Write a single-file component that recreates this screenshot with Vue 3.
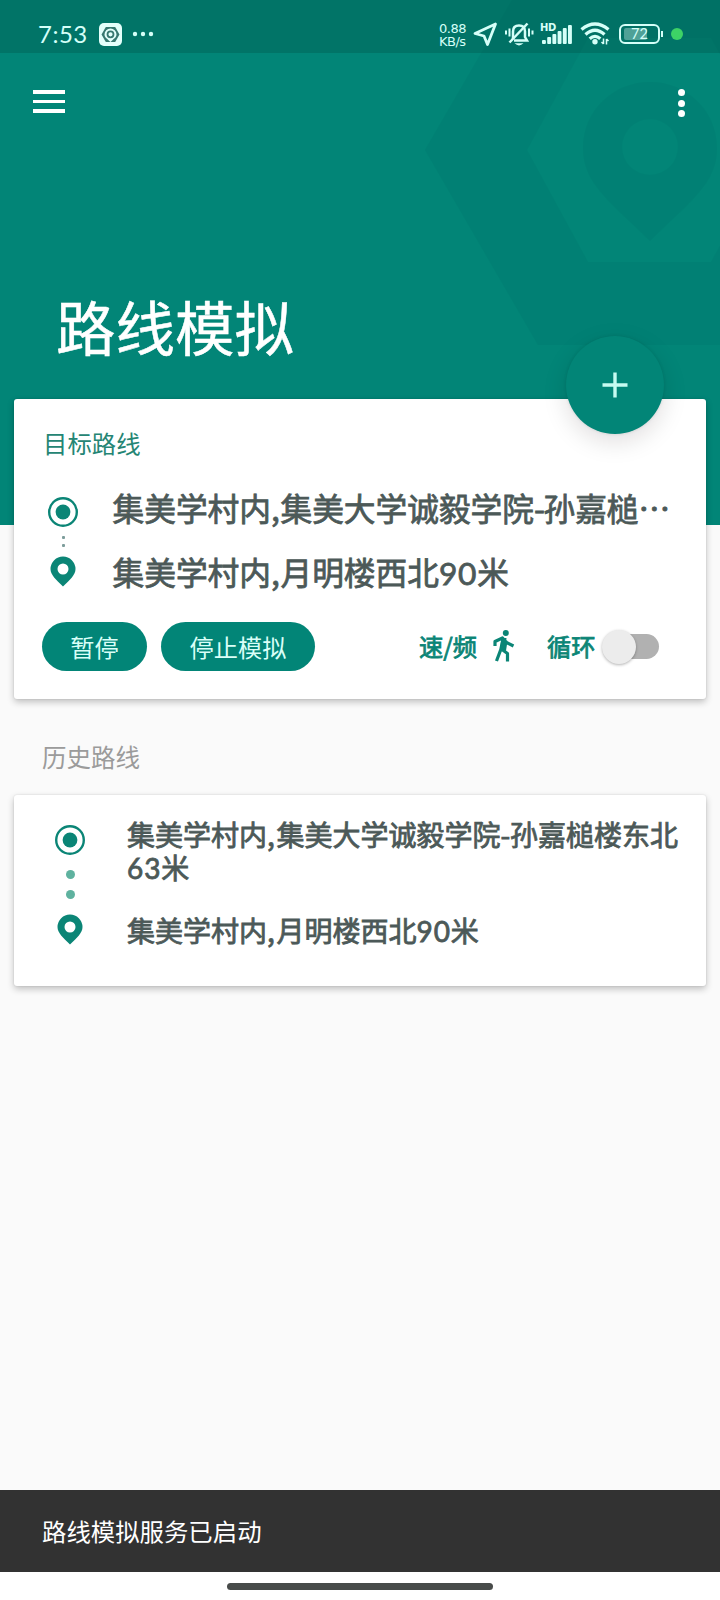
<script setup>
const start = ['集美学村内', ',', '集美大学诚毅学院', '-', '孙嘉槌']
const end = ['集美学村内', ',', '月明楼西北', '90', '米']
const current = [[...start, '…'], end]
const history = [[...start.slice(0, 4), '孙嘉槌楼东北', '63', '米'], end]
const kind = (t) => (t === ',' ? 'comma' : t === '-' ? 'dash' : /^\d/.test(t) ? 'num' : 'han')
const bars = [4, 7, 10, 13, 16, 19]
</script>

<template>
  <div class="page">
    <header class="hero">
      <svg class="mark" viewBox="0 0 300 525" width="300" height="525">
        <path fill-rule="evenodd" d="M5 150 118 -45H343L455 150 343 345H118ZM107 150 168 262H291L353 150 291 38H168Z" />
        <path fill-rule="evenodd" d="M230 82C193 82 163 111 163 148C163 184 190 201 230 241C270 201 297 184 297 148C297 111 267 82 230 82ZM230 119A28 28 0 1 1 230 175A28 28 0 1 1 230 119Z" />
      </svg>
      <div class="status">
        <span class="time">7:53</span>
        <svg class="app" width="23" height="23" viewBox="0 0 23 23">
          <rect width="23" height="23" rx="5" fill="#e4fffb" />
          <path d="M2.500 11.500 6.800 4h9.400l4.300 7.500-4.300 7.500H6.800Z" fill="#37776f" />
          <path d="M11.500 5.500a6 6 0 0 0-6 6c0 3 3 4.500 6 7.500 3-3 6-4.500 6-7.500a6 6 0 0 0-6-6Z" fill="#e4fffb" />
          <circle cx="11.500" cy="11.300" r="3" fill="none" stroke="#37776f" stroke-width="1.800" />
        </svg>
        <svg class="more" width="22" height="6" viewBox="0 0 22 6">
          <circle cx="3" cy="3" r="2.200" /><circle cx="11" cy="3" r="2.200" /><circle cx="19" cy="3" r="2.200" />
        </svg>
        <div class="speed"><span>0.88</span><span>KB/s</span></div>
        <svg class="nav" width="25" height="25" viewBox="0 0 25 25">
          <path d="M22.500 2 2 11.500 11 14 14.500 22.500Z" fill="none" stroke="#d5fff8" stroke-width="2.800" stroke-linejoin="round" />
        </svg>
        <svg class="bell" width="30" height="26" viewBox="0 0 30 26" fill="none" stroke="#d5fff8">
          <path d="M9 18V10.500C9 6.500 11.500 4.500 15 4.500S21 6.500 21 10.500V16L23 19.500H10" stroke-width="2.500" />
          <path d="M5.500 21.500 23.500 2.500" stroke-width="2.500" />
          <path d="M10.500 22.300H19.500Q15 26.500 10.500 22.300Z" fill="#d5fff8" stroke="none" />
          <path d="M5.500 7.500V15.500M2 9.500V13.500M25 7.500V15.500M28.500 9.500V13.500" stroke-width="2" />
        </svg>
        <div class="signal">
          <b>HD</b>
          <svg width="32" height="21" viewBox="0 0 32 21">
            <rect v-for="(h, i) in bars" :key="h" :x="1 + i * 5.200" :y="20 - h" width="3.900" :height="h" rx="1" fill="#d5fff8" />
          </svg>
        </div>
        <svg class="wifi" width="31" height="24" viewBox="0 0 31 24" fill="none" stroke="#d5fff8" stroke-width="3.300">
          <path d="M1.500 7.500Q15 -3.500 28.500 7.500M5.500 12.500Q15 4 24.500 12.500M9.700 16.800Q15 12 20.300 16.800" />
          <circle cx="15" cy="19.700" r="2.700" fill="#d5fff8" stroke="none" />
          <path d="M23.500 16.500V22M21.500 20 23.500 22M26.500 22.500V17M28.500 19 26.500 17" stroke-width="1.500" />
        </svg>
        <div class="battery"><i></i><span>72</span></div>
        <div class="live"></div>
      </div>
      <nav class="bar">
        <div class="menu"><i></i><i></i><i></i></div>
        <div class="dots"><i></i><i></i><i></i></div>
      </nav>
      <h1>路线模拟</h1>
    </header>

    <section class="card target">
      <button class="fab"><svg width="26" height="26" viewBox="0 0 26 26"><path d="M13 .5V25.500M.5 13H25.500" stroke="#c6fbf1" stroke-width="3.400" /></svg></button>
      <h2>目标路线</h2>
      <div class="route">
        <div class="rail">
          <svg width="30" height="30" viewBox="0 0 30 30"><circle cx="15" cy="15" r="13.800" fill="none" stroke="#0b8576" stroke-width="2.400" /><circle cx="15" cy="15" r="7.400" fill="#0b8576" /></svg>
          <div class="gap"><i></i><i></i></div>
          <svg width="26" height="31" viewBox="0 0 26 31"><path fill="#0b8576" fill-rule="evenodd" d="M13 0.500A12.500 12.500 0 0 0 .5 13C.5 19 6 23.500 13 30.500 20 23.500 25.500 19 25.500 13A12.500 12.500 0 0 0 13 .5ZM13 7.500A5.500 5.500 0 1 1 13 18.500 5.500 5.500 0 1 1 13 7.500Z" /></svg>
        </div>
        <div class="stops">
          <p v-for="(line, i) in current" :key="i"><span v-for="(t, j) in line" :key="j" :class="kind(t)">{{ t }}</span></p>
        </div>
      </div>
      <div class="actions">
        <button class="pill pause">暂停</button>
        <button class="pill stop">停止模拟</button>
        <span class="label rate">速<em>/</em>频</span>
        <svg class="walk" width="22" height="33" viewBox="0 0 22 33">
          <circle cx="12.800" cy="3.100" r="3" fill="#0b8576" />
          <path d="M10 9 7.800 19.500 3.500 31M9 19.500 14.500 23.500V31.500M2 16V11.500L9.500 8 13.500 12.500 20.500 16M13 10.500 11.500 20" fill="none" stroke="#0b8576" stroke-width="3.200" stroke-linejoin="round" />
          <path d="M8.500 8H13.500L12 21 7 20Z" fill="#0b8576" />
        </svg>
        <span class="label loop">循环</span>
        <div class="switch"><i></i></div>
      </div>
    </section>

    <h3>历史路线</h3>

    <section class="card past">
      <div class="rail">
        <svg width="30" height="30" viewBox="0 0 30 30"><circle cx="15" cy="15" r="13.800" fill="none" stroke="#0b8576" stroke-width="2.400" /><circle cx="15" cy="15" r="7.400" fill="#0b8576" /></svg>
        <div class="gap"><i></i><i></i></div>
        <svg width="26" height="31" viewBox="0 0 26 31"><path fill="#0b8576" fill-rule="evenodd" d="M13 0.500A12.500 12.500 0 0 0 .5 13C.5 19 6 23.500 13 30.500 20 23.500 25.500 19 25.500 13A12.500 12.500 0 0 0 13 .5ZM13 7.500A5.500 5.500 0 1 1 13 18.500 5.500 5.500 0 1 1 13 7.500Z" /></svg>
      </div>
      <div class="stops">
        <p v-for="(line, i) in history" :key="i"><span v-for="(t, j) in line" :key="j" :class="kind(t)">{{ t }}</span></p>
      </div>
    </section>

    <footer class="snack">路线模拟服务已启动</footer>
    <div class="home"><i></i></div>
  </div>
</template>

<style>
body { margin: 0; background: #fafafa; }
</style>

<style scoped>
* { box-sizing: border-box; }
.page { width: 720px; height: 1600px; display: flex; flex-direction: column; overflow: hidden; background: #fafafa; font-family: "Noto Sans CJK SC", sans-serif; }
h1, h2, h3, p { margin: 0; font-weight: 400; }
button { border: 0; padding: 0; font-family: inherit; }
i { display: block; }
svg { display: block; flex: none; }
.hero { position: relative; flex: none; height: 525px; background: #028577; color: #fff; }
.mark { position: absolute; right: 0; top: 0; fill: #007b70; opacity: .4; }
.status { position: relative; display: flex; align-items: flex-start; height: 53px; padding: 15px 0 0 38px; background: rgba(0, 85, 75, .35); color: #d5fff8; }
.time { width: 50px; font: 400 24px/38px Lato, sans-serif; letter-spacing: .5px; }
.app { margin: 8px 0 0 11px; }
.more { margin: 16px 0 0 10px; fill: #d5fff8; }
.speed { display: flex; flex-direction: column; width: 32px; margin: 8px 0 0 285px; font: 400 13px/12.500px "DejaVu Sans", sans-serif; letter-spacing: -.5px; }
.nav { margin: 7px 0 0 2px; }
.bell { margin: 6px 0 0 6px; }
.signal { position: relative; margin: 9px 0 0 7px; }
.signal b { position: absolute; left: -1px; top: -1px; font: 700 10px/9px "DejaVu Sans", sans-serif; letter-spacing: -.3px; }
.wifi { margin: 7px 0 0 7px; }
.battery { position: relative; width: 41px; height: 20px; margin: 9px 0 0 8px; border: 2px solid #d5fff8; border-radius: 6px; text-align: center; font: 400 14.500px/16px Lato, sans-serif; }
.battery i { position: absolute; left: 3px; top: 2px; width: 23px; height: 12px; background: #4fa197; border-radius: 2px; }
.battery span { position: relative; }
.battery::after { content: ""; position: absolute; right: -5px; top: 5px; width: 2px; height: 6px; background: #d5fff8; }
.live { width: 12px; height: 12px; margin: 13px 0 0 11px; border-radius: 50%; background: #3dd266; }
.bar { position: relative; display: flex; justify-content: space-between; padding: 36px 35px 0 33px; }
.menu { display: flex; flex-direction: column; gap: 6px; padding-top: 1px; }
.menu i { width: 32px; height: 3.600px; background: #fff; }
.dots { display: flex; flex-direction: column; gap: 3.500px; }
.dots i { width: 7px; height: 7px; border-radius: 50%; background: #fff; }
h1 { position: relative; padding: 165px 0 0 56px; font-size: 59.500px; line-height: 86px; -webkit-text-stroke: .5px; }
.card { position: relative; flex: none; width: 692px; margin: 0 14px; background: #fff; border-radius: 3px; box-shadow: 0 3px 7px rgba(0, 0, 0, .24), 0 0 2px rgba(0, 0, 0, .12); }
.target { height: 300px; margin-top: -126px; }
.fab { position: absolute; left: 552px; top: -63px; width: 98px; height: 98px; display: grid; place-items: center; border-radius: 50%; background: #028577; box-shadow: 0 8px 24px rgba(20, 0, 15, .13), 0 0 3px rgba(0, 50, 42, .15); }
h2 { padding: 26px 0 0 29px; font-size: 24.400px; line-height: 36px; color: #258574; }
.route { display: flex; height: 128px; padding-left: 34px; margin-top: 25px; }
.rail { display: flex; flex-direction: column; align-items: center; width: 30px; }
.target .rail { padding-top: 11px; }
.gap { display: flex; flex-direction: column; align-items: center; }
.target .gap { gap: 5px; margin: 9px 0 9px; }
.target .gap i { width: 3px; height: 3px; background: #7d9d9b; border-radius: 1px; }
.stops { color: #4c5958; -webkit-text-stroke: .8px; }
.stops span { display: inline-block; }
.target .stops { margin: -2px 0 0 34.500px; font-size: 31.700px; white-space: nowrap; }
.target p { height: 64px; line-height: 46px; }
.comma, .dash { width: 9.500px; }
.num { font-family: Lato, sans-serif; }
.target .num { letter-spacing: .8px; }
.past .num { letter-spacing: .9px; }
.actions { display: flex; align-items: center; height: 49px; margin: 8px 0 0 28px; }
.pill { height: 49px; border-radius: 25px; background: #028577; color: #d9fff8; font-size: 24.200px; line-height: 48px; }
.pause { width: 105px; }
.stop { width: 154px; margin-left: 14px; }
.label { color: #0b8576; font-size: 24.200px; line-height: 36px; white-space: nowrap; -webkit-text-stroke: .8px; margin-top: -2px; }
.label em { font-style: normal; display: inline-block; width: 9.500px; }
.rate { width: 58px; margin-left: 104px; }
.walk { margin-left: 16px; }
.loop { width: 49px; margin-left: 32px; }
.switch { position: relative; width: 44px; height: 25px; margin-left: 19px; border-radius: 13px; background: #b1b1b1; }
.switch i { position: absolute; left: -13px; top: -4px; width: 34px; height: 34px; border-radius: 50%; background: #ececec; box-shadow: 0 1px 3px rgba(0, 0, 0, .3); }
h3 { flex: none; padding: 40px 0 0 42px; height: 96px; font-size: 24.500px; line-height: 36px; color: #9b9b9b; }
.past { display: flex; height: 191px; padding: 23px 0 0 41px; }
.past .rail { padding-top: 7px; }
.past .gap { gap: 11px; margin: 15px 0 15px; }
.past .gap i { width: 9px; height: 9px; border-radius: 50%; background: #5fb29f; }
.past .stops { width: 570px; margin-left: 42px; font-size: 28px; line-height: 33px; }
.past p + p { margin-top: 29px; }
.snack { flex: none; height: 82px; margin-top: auto; padding-left: 42px; background: #323232; color: #fff; font-size: 24.400px; line-height: 82px; }
.home { flex: none; height: 28px; padding-top: 11px; background: #fff; }
.home i { width: 266px; height: 7px; margin: 0 auto; border-radius: 4px; background: #484b4a; }
</style>
